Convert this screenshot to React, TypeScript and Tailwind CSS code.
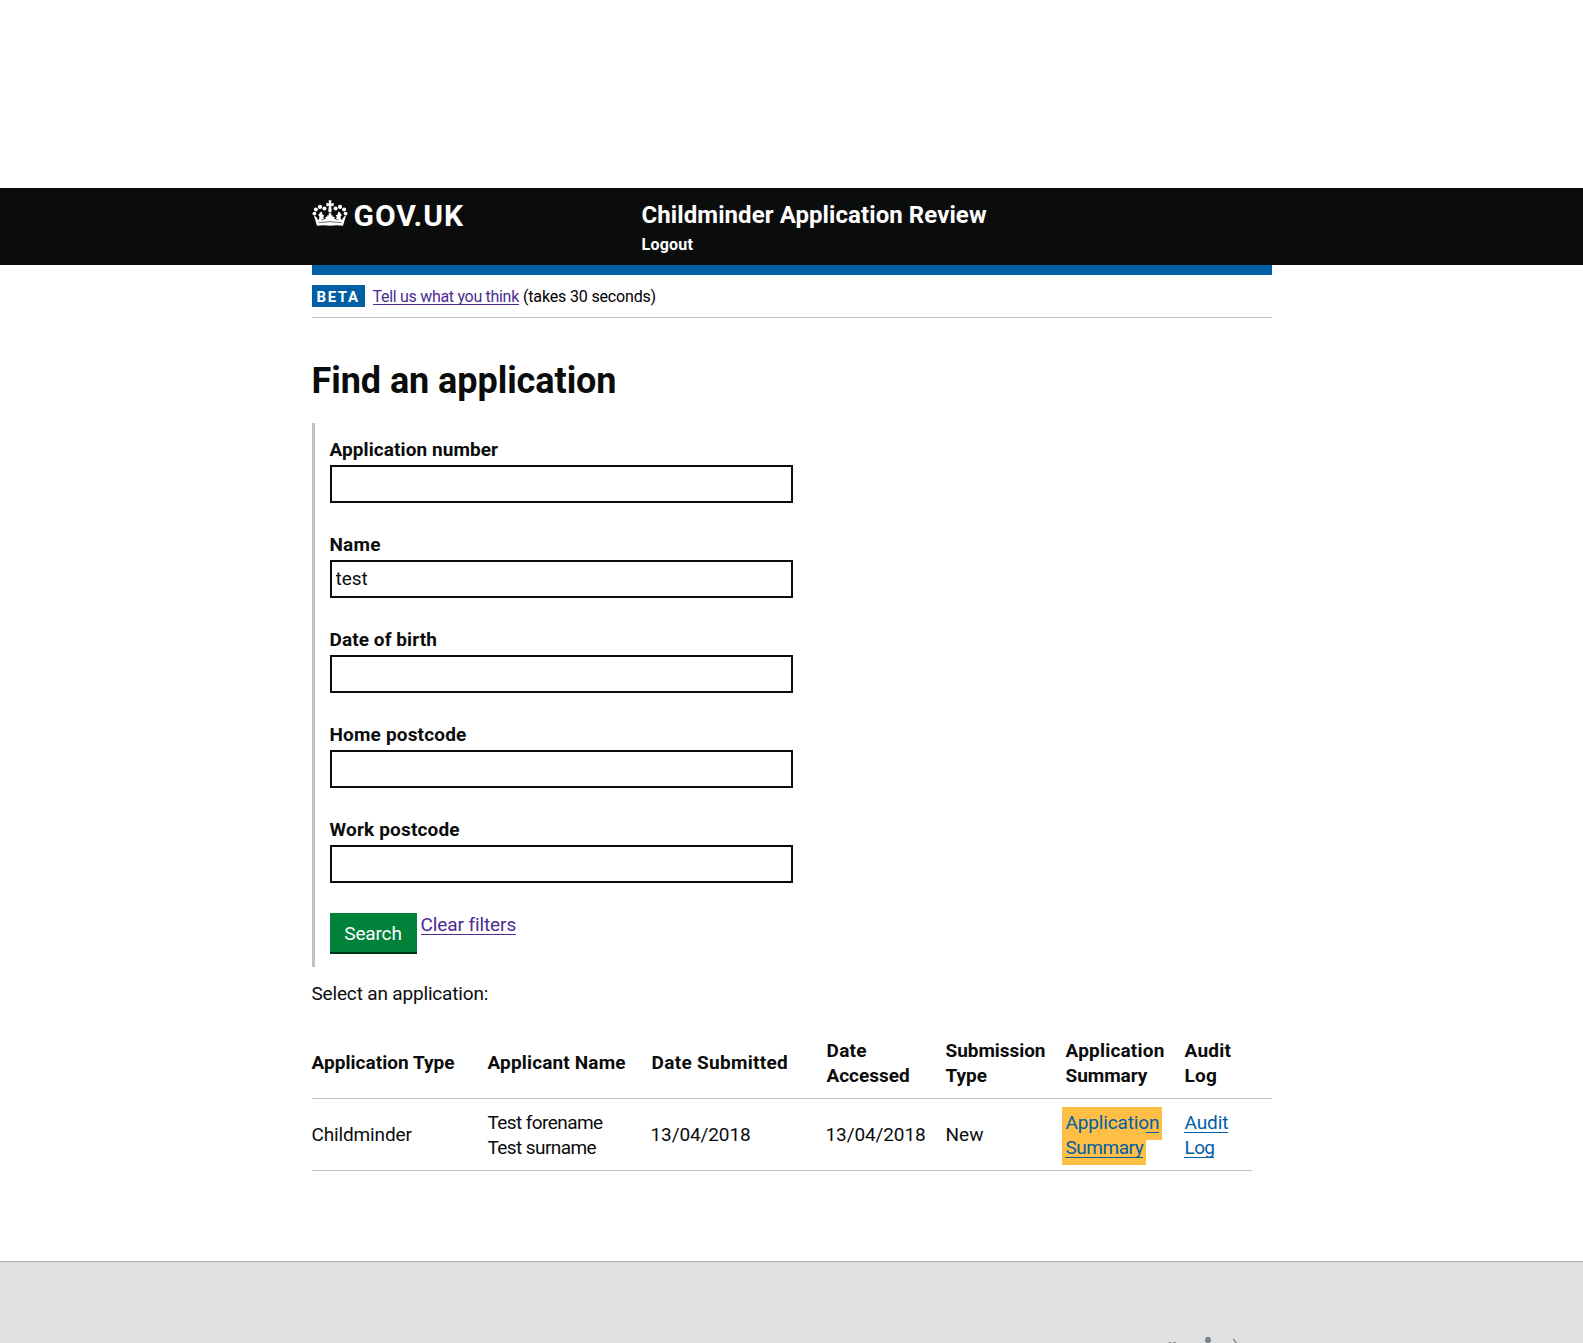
import type { ReactNode } from "react";

function Crown() {
  const half = (
    <g>
      <circle cx="2.4" cy="13.6" r="1.9" />
      <circle cx="3.9" cy="9.4" r="2" />
      <circle cx="8" cy="6.9" r="2.1" />
      <circle cx="12.4" cy="8.6" r="2" />
      <path d="M1.9 15.5 Q4.5 16.2 6.2 20.2 Q7.6 18.6 7.4 16.5 L6.2 15.3 L8 12.6 L9.8 11.6 L10.4 14.6 L12.2 15.4 L11.2 17 Q11.6 19.6 14 19 L13 17.2 L15.2 16.6 L15.6 15 L18 15.8 V25.8 Q11 24.6 5 25.8 Z" />
    </g>
  );
  return (
    <svg className="mt-3 h-[26px] w-9 shrink-0" viewBox="0 0 36 26" fill="#fff" aria-hidden="true">
      {half}
      <g transform="translate(36 0) scale(-1 1)">{half}</g>
      <path d="M16.6 0.2 H19.4 L19 3.4 L21.6 2.7 V6.4 L19.1 5.8 L19.7 10.8 H16.3 L16.9 5.8 L14.4 6.4 V2.7 L17 3.4 Z" />
      <circle cx="18" cy="11" r="1.6" />
      <path d="M16.6 13.2 h2.8 l-.4 3 h-2 Z" />
      <path
        d="M6.5 22.6 Q18 20.8 29.5 22.6 M9.5 20 l3.4 -1.2 M26.5 20 l-3.4 -1.2"
        stroke="#0b0c0c"
        strokeWidth="0.6"
        fill="none"
      />
    </svg>
  );
}

function FooterCrest() {
  return (
    <svg className="ml-[856px] h-[7px] w-[70px]" viewBox="0 0 70 7" fill="none" stroke="#6f777b" aria-hidden="true">
      <path d="M0.5 5.8 h3 M5 5.8 h3" strokeWidth="1" />
      <circle cx="40" cy="3" r="3" fill="#6f777b" stroke="none" />
      <path d="M37 3 h6 M40 0.5 v5.5" strokeWidth="0.7" stroke="#98a0a3" />
      <path d="M65.3 2 L68.8 6.5" strokeWidth="1.2" />
    </svg>
  );
}

const fields = [
  { label: "Application number", value: "", track: "tracking-[0.08px]" },
  { label: "Name", value: "test", track: "tracking-[0.2px]" },
  { label: "Date of birth", value: "", track: "tracking-[0.08px]" },
  { label: "Home postcode", value: "", track: "tracking-[0.17px]" },
  { label: "Work postcode", value: "", track: "tracking-[0.17px]" },
];

function Cell({ children, className = "" }: { children: ReactNode; className?: string }) {
  return <div className={`self-center whitespace-nowrap ${className}`}>{children}</div>;
}

const columns = "grid grid-cols-[176px_164px_175px_119px_120px_119px_67px]";

export default function App() {
  return (
    <div className="h-[1343px] overflow-hidden bg-white pt-[188px] font-[Roboto,sans-serif] text-[19px] leading-[25px] text-[#0b0c0c]">
      <header className="h-[77px] bg-[#0b0c0c] text-white">
        <div className="mx-auto flex w-[960px]">
          <a className="flex w-[330px]">
            <Crown />
            <span className="mt-[13px] ml-[6px] text-[30px] leading-[30px] font-bold tracking-[0.95px]">GOV.UK</span>
          </a>
          <div className="pt-3 font-bold">
            <div className="text-2xl leading-[30px] tracking-[0.08px]">Childminder Application Review</div>
            <a className="mt-[5px] block text-base leading-5 tracking-[0.25px]">Logout</a>
          </div>
        </div>
      </header>

      <main className="mx-auto w-[960px]">
        <div className="h-[10px] bg-[#005ea5]" />
        <div className="flex h-[43px] items-start border-b border-[#bfc1c3] pt-[10px] text-base leading-[22px] text-black">
          <strong className="h-[22px] w-[53px] bg-[#005ea5] pl-[5px] text-[15px] leading-6 tracking-[1.6px] text-white">
            BETA
          </strong>
          <a className="mt-px ml-2 h-[19px] border-b border-[#4c2c92] leading-[21px] tracking-[-0.3px] text-[#4c2c92]">
            Tell us what you think
          </a>
          <span className="ml-1 leading-6 tracking-[-0.16px]">(takes 30 seconds)</span>
        </div>

        <h1 className="mt-[43px] text-4xl leading-[41px] font-bold tracking-[-0.06px]">Find an application</h1>

        <form className="mt-[21px] h-[544px] border-l-[3px] border-[#bfc1c3] pt-[14px] pl-[15px]">
          {fields.map((f) => (
            <div key={f.label} className="mb-[29px]">
              <label className={`block font-bold ${f.track}`}>{f.label}</label>
              <input
                className="mt-[3px] block h-[38px] w-[463px] border-2 border-[#0b0c0c] bg-white px-1 pb-0.5 outline-none"
                defaultValue={f.value}
              />
            </div>
          ))}
          <div className="flex items-start pt-px">
            <button
              type="button"
              className="h-[39px] w-[87px] bg-[#00823b] pt-[2px] tracking-[-0.15px] text-white shadow-[0_2px_0_#003618]"
            >
              Search
            </button>
            <a className="ml-1 h-[22px] border-b border-[#4c2c92] leading-[23px] tracking-[-0.1px] text-[#4c2c92]">
              Clear filters
            </a>
          </div>
        </form>

        <p className="mt-[14px] tracking-[-0.17px]">Select an application:</p>

        <div className={`${columns} mt-[22px] h-[71px] border-b border-[#bfc1c3] font-bold`}>
          <Cell className="pb-0.5 tracking-[0.03px]">Application Type</Cell>
          <Cell className="pb-0.5 tracking-[0.15px]">Applicant Name</Cell>
          <Cell className="pb-0.5 tracking-[0.31px]">Date Submitted</Cell>
          <Cell className="tracking-[-0.03px]">
            <span className="tracking-[0.3px]">Date</span>
            <br />
            Accessed
          </Cell>
          <Cell className="tracking-[-0.05px]">
            Submission
            <br />
            Type
          </Cell>
          <Cell>
            <span className="tracking-[0.2px]">Application</span>
            <br />
            <span className="tracking-[-0.05px]">Summary</span>
          </Cell>
          <Cell className="tracking-[0.25px]">
            Audit
            <br />
            Log
          </Cell>
        </div>

        <div className={`${columns} h-[72px] w-[940px] border-b border-[#bfc1c3]`}>
          <Cell className="tracking-[-0.14px]">Childminder</Cell>
          <Cell className="tracking-[-0.58px]">
            Test forename
            <br />
            Test surname
          </Cell>
          <Cell className="-ml-px tracking-[-0.1px]">13/04/2018</Cell>
          <Cell className="-ml-px tracking-[-0.1px]">13/04/2018</Cell>
          <Cell>New</Cell>
          <a className="-ml-1 block self-start pt-2 whitespace-nowrap text-[#005ea5]">
            <span className="block h-[33px] w-[100px] bg-[#ffbf47] px-1 pt-[3px]">
              <span className="block h-[23px] w-[93px] border-b border-[#005ea5] tracking-[-0.15px]">Application</span>
            </span>
            <span className="-mt-2 block h-[33px] w-[84px] bg-[#ffbf47] px-[3px] pt-[3px]">
              <span className="block h-[23px] border-b border-[#005ea5] pl-px tracking-[-0.48px]">Summary</span>
            </span>
          </a>
          <a className="block self-start pt-[11px] text-[#005ea5]">
            <span className="-ml-px block h-[23px] w-11 border-b border-[#005ea5] pl-px tracking-[-0.1px]">Audit</span>
            <span className="mt-0.5 -ml-px block h-[23px] w-[30px] border-b border-[#005ea5] pl-px tracking-[-0.6px]">
              Log
            </span>
          </a>
        </div>
      </main>

      <footer className="mt-[90px] h-[82px] border-t border-[#a1acb2] bg-[#dee0e2]">
        <div className="mx-auto w-[960px] pt-[75px]">
          <FooterCrest />
        </div>
      </footer>
    </div>
  );
}
